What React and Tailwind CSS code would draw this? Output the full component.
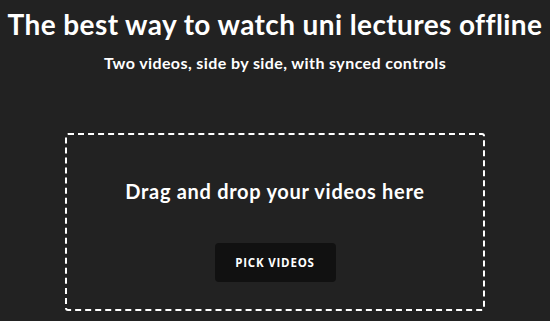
export default function App() {
  return (
    <div
      className="min-h-screen w-full bg-[#222222] text-white flex flex-col items-center"
      style={{ fontFamily: "Lato, 'Open Sans', sans-serif" }}
    >
      <h1 className="mt-[7px] text-[28px] font-bold leading-[34px] tracking-[0.4px]">
        The best way to watch uni lectures offline
      </h1>
      <p className="mt-[12px] text-[16px] font-bold leading-[20px] tracking-[0.4px]">
        Two videos, side by side, with synced controls
      </p>
      <div className="mt-[60px] w-[420px] h-[178px] border-2 border-dashed border-white rounded-[3px] flex flex-col items-center">
        <p className="mt-[44px] text-[20px] font-bold leading-[24px] tracking-[0.7px]">
          Drag and drop your videos here
        </p>
        <button
          type="button"
          className="mt-[40px] w-[121px] h-[39px] rounded-[4px] bg-[#111111] text-[11.5px] font-bold tracking-[0.8px] text-white"
          style={{ fontFamily: "'Open Sans', sans-serif" }}
        >
          PICK VIDEOS
        </button>
      </div>
    </div>
  );
}
